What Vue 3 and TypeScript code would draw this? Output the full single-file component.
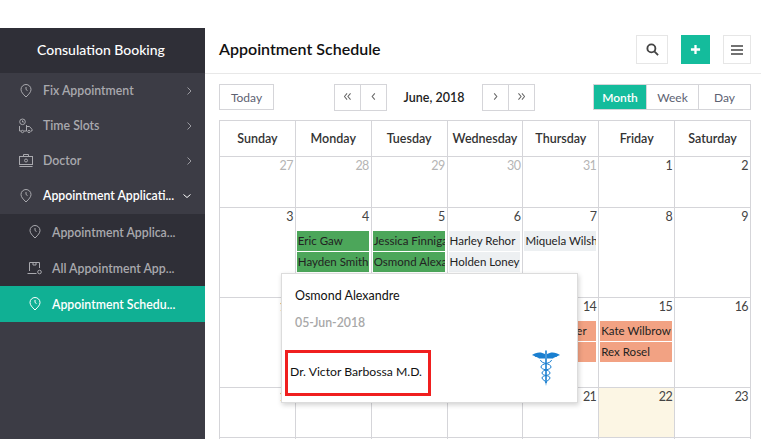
<script setup lang="ts">
interface CalEvent {
  name: string
  kind: 'green' | 'grey' | 'orange'
}
interface CalDay {
  day: number
  muted?: boolean
  current?: boolean
  events?: CalEvent[]
}

const weekdays = ['Sunday', 'Monday', 'Tuesday', 'Wednesday', 'Thursday', 'Friday', 'Saturday']

const days: CalDay[] = [
  { day: 27, muted: true }, { day: 28, muted: true }, { day: 29, muted: true },
  { day: 30, muted: true }, { day: 31, muted: true }, { day: 1 }, { day: 2 },
  { day: 3 },
  { day: 4, events: [{ name: 'Eric Gaw', kind: 'green' }, { name: 'Hayden Smith', kind: 'green' }] },
  { day: 5, events: [{ name: 'Jessica Finnigan', kind: 'green' }, { name: 'Osmond Alexandre', kind: 'green' }] },
  { day: 6, events: [{ name: 'Harley Rehor', kind: 'grey' }, { name: 'Holden Loney', kind: 'grey' }] },
  { day: 7, events: [{ name: 'Miquela Wilsher', kind: 'grey' }] },
  { day: 8 }, { day: 9 },
  { day: 10 }, { day: 11 }, { day: 12 }, { day: 13 },
  { day: 14, events: [{ name: 'Lana Fowler', kind: 'orange' }, { name: 'Ian Lee', kind: 'orange' }] },
  { day: 15, events: [{ name: 'Kate Wilbrow', kind: 'orange' }, { name: 'Rex Rosel', kind: 'orange' }] },
  { day: 16 },
  { day: 17 }, { day: 18 }, { day: 19 }, { day: 20 }, { day: 21 },
  { day: 22, current: true }, { day: 23 },
  { day: 24 }, { day: 25 }, { day: 26 }, { day: 27 }, { day: 28 }, { day: 29 }, { day: 30 },
]
</script>

<template>
  <div class="page">
    <aside class="sidebar">
      <div class="brand">Consulation Booking</div>

      <div class="item">
        <svg class="ico" viewBox="0 0 16 18"><path d="M8 15C5 12 3 10 3 7.500a5 5 0 0 1 10 0C13 10 11 12 8 15z" /><path d="M8 5v2.500l1.500 1" /></svg>
        <span class="label">Fix Appointment</span>
        <svg class="chev" viewBox="0 0 8 12"><path d="M2.500 2.500L6 6 2.500 9.500" /></svg>
      </div>
      <div class="item">
        <svg class="ico" viewBox="0 0 16 18"><circle cx="4.500" cy="4.800" r="2.800" /><path d="M4.500 3.500v1.500h1.300M1.500 9v5h1.800M6 14h2.800M8.500 14V8M8.500 9.500h3l2.500 2.800V14h-1" /><circle cx="4.500" cy="14.500" r="1.200" /><circle cx="11" cy="14.500" r="1.200" /></svg>
        <span class="label">Time Slots</span>
        <svg class="chev" viewBox="0 0 8 12"><path d="M2.500 2.500L6 6 2.500 9.500" /></svg>
      </div>
      <div class="item">
        <svg class="ico" viewBox="0 0 16 18"><rect x="1.500" y="4.500" width="13" height="8" /><path d="M5.500 4.500v-2h5v2M1.500 14.500h13" /><circle cx="8" cy="8.500" r="1.500" /></svg>
        <span class="label">Doctor</span>
        <svg class="chev" viewBox="0 0 8 12"><path d="M2.500 2.500L6 6 2.500 9.500" /></svg>
      </div>
      <div class="item open">
        <svg class="ico" viewBox="0 0 16 18"><path d="M8 15C5 12 3 10 3 7.500a5 5 0 0 1 10 0C13 10 11 12 8 15z" /><path d="M8 5v2.500l1.500 1" /></svg>
        <span class="label">Appointment Applicati...</span>
        <svg class="chev down" viewBox="0 0 12 8"><path d="M2.500 2.500L6 5.500l3.500-3" /></svg>
      </div>

      <div class="submenu">
        <div class="subitem">
          <svg class="ico" viewBox="0 0 16 18"><path d="M8 15C5 12 3 10 3 7.500a5 5 0 0 1 10 0C13 10 11 12 8 15z" /><path d="M8 5v2.500l1.500 1" /></svg>
          <span class="label">Appointment Applica...</span>
        </div>
        <div class="subitem">
          <svg class="ico" viewBox="0 0 16 18"><path d="M2.500 12V3.500h10V9M.5 14.500h9" /><path d="M6 3.500v2.500h3V3.500" /><circle cx="12.500" cy="13" r="1.800" /></svg>
          <span class="label">All Appointment App...</span>
        </div>
        <div class="subitem active">
          <svg class="ico" viewBox="0 0 16 18"><path d="M8 15C5 12 3 10 3 7.500a5 5 0 0 1 10 0C13 10 11 12 8 15z" /><path d="M8 5v2.500l1.500 1" /></svg>
          <span class="label">Appointment Schedu...</span>
        </div>
      </div>
    </aside>

    <main class="main">
      <header class="topbar">
        <h1>Appointment Schedule</h1>
        <div class="actions">
          <button class="icon-btn search">
            <svg viewBox="0 0 14 14" width="13" height="13"><circle cx="5.800" cy="5.800" r="4.300" /><path d="M9 9l4 4" /></svg>
          </button>
          <button class="icon-btn add">
            <svg viewBox="0 0 12 12" width="11" height="11"><path d="M6 1v10M1 6h10" /></svg>
          </button>
          <button class="icon-btn menu">
            <svg viewBox="0 0 12 10" width="12" height="10"><path d="M0 1h12M0 5h12M0 9h12" /></svg>
          </button>
        </div>
      </header>

      <div class="content">
        <div class="toolbar">
          <button class="today-btn">Today</button>
          <div class="pager">
            <div class="pager-group">
              <button><svg viewBox="0 0 8 8" width="7" height="7"><path d="M3.500.5L.5 4l3 3.500M7.500.5L4.500 4l3 3.500" /></svg></button>
              <button><svg viewBox="0 0 8 8" width="7" height="7"><path d="M5.500.5L2.500 4l3 3.500" /></svg></button>
            </div>
            <span class="month">June, 2018</span>
            <div class="pager-group">
              <button><svg viewBox="0 0 8 8" width="7" height="7"><path d="M2.500.5L5.500 4l-3 3.500" /></svg></button>
              <button><svg viewBox="0 0 8 8" width="7" height="7"><path d="M.5.5L3.500 4l-3 3.500M4.500.5L7.500 4l-3 3.500" /></svg></button>
            </div>
          </div>
          <div class="views">
            <button class="on">Month</button>
            <button>Week</button>
            <button>Day</button>
          </div>
        </div>

        <div class="calendar">
          <div v-for="name in weekdays" :key="name" class="head">{{ name }}</div>
          <div
            v-for="(d, i) in days"
            :key="i"
            class="cell"
            :class="{ current: d.current }"
          >
            <div class="num" :class="{ muted: d.muted }">{{ d.day }}</div>
            <div v-for="e in d.events" :key="e.name" class="event" :class="e.kind">{{ e.name }}</div>
          </div>
        </div>
      </div>

      <div class="popover">
        <div class="pop-name">Osmond Alexandre</div>
        <div class="pop-date">05-Jun-2018</div>
        <div class="pop-foot">
          <div class="doctor">Dr. Victor Barbossa M.D.</div>
          <svg class="caduceus" viewBox="0 0 28 36" width="28" height="36">
            <path class="fill" d="M13 4C9 1.500 4 2 0 5c1.500.5 2.500 1 3.500 2 1.500 0 2.500.5 3.500 1.500h6zM15 4c4-2.500 9-2 13 1-1.500.5-2.500 1-3.500 2-1.500 0-2.500.5-3.500 1.500h-6z" />
            <path class="fill" d="M13.200 1a.8.8 0 0 1 1.600 0V31L14 36l-.8-5z" />
            <path class="line" d="M8.500 10C9 14 19 13 19 17c0 3-9 2.500-9 6 0 3 8 2 8 5 0 2-4 2.500-4 5M19.500 10C19 14 9 13 9 17c0 3 9 2.500 9 6 0 3-8 2-8 5 0 2 4 2.500 4 5" />
          </svg>
        </div>
      </div>
    </main>
  </div>
</template>

<style scoped>
.page {
  display: flex;
  height: 439px;
  padding-top: 28px;
  box-sizing: border-box;
  overflow: hidden;
  font-family: "Lato", "Open Sans", sans-serif;
  background: #fff;
}

.sidebar {
  width: 205px;
  flex-shrink: 0;
  background: #3c3c45;
}

.brand {
  height: 45px;
  line-height: 44px;
  padding-right: 3px;
  box-sizing: border-box;
  text-align: center;
  background: #2f2f37;
  color: #fff;
  font-size: 14px;
  font-weight: 500;
}

.item {
  display: flex;
  align-items: center;
  height: 35px;
  padding-left: 18px;
  color: #a9a9ae;
  font-size: 12.300px;
  font-weight: 600;
}

.item.open {
  color: #fff;
}

.ico {
  width: 16px;
  height: 18px;
  flex-shrink: 0;
  margin-right: 9px;
  fill: none;
  stroke: #a9a9ae;
  stroke-width: 1;
}

.label {
  white-space: nowrap;
}

.chev {
  width: 8px;
  height: 12px;
  margin-left: auto;
  margin-right: 12px;
  fill: none;
  stroke: #9a9aa0;
  stroke-width: 1;
}

.chev.down {
  width: 12px;
  height: 8px;
  margin-right: 12px;
  stroke: #fff;
}

.submenu {
  margin-top: 1px;
  background: #2f2f37;
}

.subitem {
  display: flex;
  align-items: center;
  height: 36px;
  padding-left: 27px;
  color: #a9a9ae;
  font-size: 12.300px;
  font-weight: 600;
}

.subitem.active {
  background: #10b094;
  color: #fff;
}

.subitem.active .ico {
  stroke: #fff;
}

.main {
  position: relative;
  flex: 1;
  min-width: 0;
}

.topbar {
  display: flex;
  align-items: center;
  justify-content: space-between;
  height: 46px;
  padding: 0 10px 0 14px;
  box-sizing: border-box;
  border-bottom: 1px solid #e8e8e8;
}

h1 {
  margin: 0 0 4px;
  font-size: 16px;
  font-weight: 600;
  color: #111;
}

.actions {
  display: flex;
  gap: 13px;
  margin-bottom: 2px;
}

.icon-btn {
  display: flex;
  align-items: center;
  justify-content: center;
  height: 29px;
  padding: 0;
  background: #fff;
  border: 1px solid #e6e6e6;
}

.icon-btn svg {
  fill: none;
  stroke: #444;
}

.search {
  width: 32px;
}

.search svg {
  stroke-width: 2;
}

.add {
  width: 29px;
  background: #14bc9c;
  border-color: #14bc9c;
}

.add svg {
  stroke: #fff;
  stroke-width: 2.500;
}

.menu {
  width: 28px;
}

.menu svg {
  stroke-width: 1.500;
}

.content {
  padding: 10px 10px 0 14px;
}

.toolbar {
  display: flex;
  align-items: flex-start;
  height: 36px;
}

button {
  font-family: inherit;
  cursor: pointer;
}

.today-btn {
  width: 55px;
  height: 26px;
  padding: 0;
  background: #fff;
  border: 1px solid #d5d5d9;
  color: #5d6272;
  font-size: 12px;
}

.pager {
  display: flex;
  align-items: center;
  margin-left: 60px;
}

.pager-group {
  display: flex;
}

.pager-group button {
  display: flex;
  align-items: center;
  justify-content: center;
  width: 27px;
  height: 27px;
  padding: 0 0 2px;
  margin-right: -1px;
  background: #fff;
  border: 1px solid #d5d5d9;
}

.pager-group svg {
  fill: none;
  stroke: #666;
  stroke-width: 1.200;
}

.month {
  width: 96px;
  padding-bottom: 1px;
  text-align: center;
  font-size: 12.500px;
  font-weight: 600;
  color: #222;
}

.views {
  display: flex;
  margin-left: 59px;
  border: 1px solid #d5d5d9;
  height: 26px;
  box-sizing: border-box;
}

.views button {
  width: 52px;
  padding: 0;
  background: #fff;
  border: 0;
  border-left: 1px solid #d5d5d9;
  color: #5d6272;
  font-size: 12px;
}

.views button:first-child {
  border-left: 0;
}

.views button.on {
  background: #14bc9c;
  color: #fff;
  font-weight: 600;
}

.calendar {
  display: grid;
  grid-template-columns: repeat(7, 1fr);
  grid-template-rows: 36px 51px 90px 90px 50px 50px;
  width: 532px;
  border-top: 1px solid #d5d5d9;
  border-left: 1px solid #d5d5d9;
  box-sizing: border-box;
}

.head,
.cell {
  border-right: 1px solid #d5d5d9;
  border-bottom: 1px solid #d5d5d9;
  box-sizing: border-box;
  min-width: 0;
}

.head {
  display: flex;
  align-items: center;
  justify-content: center;
  font-size: 12.500px;
  font-weight: 600;
  color: #333;
}

.cell.current {
  background: #fcf6e4;
}

.num {
  height: 23px;
  padding: 1px 2px 0 0;
  box-sizing: border-box;
  text-align: right;
  font-size: 12.500px;
  letter-spacing: -0.6px;
  color: #444;
}

.num.muted {
  color: #b5b5b5;
}

.event {
  height: 20px;
  line-height: 20px;
  margin: 0 2px 1px 1px;
  padding-left: 1px;
  overflow: hidden;
  white-space: nowrap;
  font-size: 11.500px;
  color: #222;
}

.event.green {
  background: #4ca65a;
}

.event.grey {
  background: #edf0f2;
}

.event.orange {
  background: #f2a283;
}

.popover {
  position: absolute;
  left: 76px;
  top: 245px;
  width: 297px;
  height: 130px;
  box-sizing: border-box;
  padding: 14px 3px 5px 13px;
  background: #fff;
  border: 1px solid #dcdcdc;
  box-shadow: 1px 2px 5px rgba(0, 0, 0, 0.18);
}

.pop-name {
  font-size: 12.500px;
  color: #111;
}

.pop-date {
  margin-top: 12px;
  font-size: 12.300px;
  font-weight: 600;
  color: #a8a8a8;
}

.pop-foot {
  position: relative;
  margin: 20px 0 0 -10px;
}

.doctor {
  width: 146px;
  height: 46px;
  box-sizing: border-box;
  padding: 11px 0 0 2px;
  border: 3px solid #f01f1f;
  font-size: 12.200px;
  color: #111;
  white-space: nowrap;
}

.caduceus {
  position: absolute;
  right: 14px;
  top: 0;
}

.caduceus .fill {
  fill: #1a7fd0;
}

.caduceus .line {
  fill: none;
  stroke: #1a7fd0;
  stroke-width: 1;
}
</style>
